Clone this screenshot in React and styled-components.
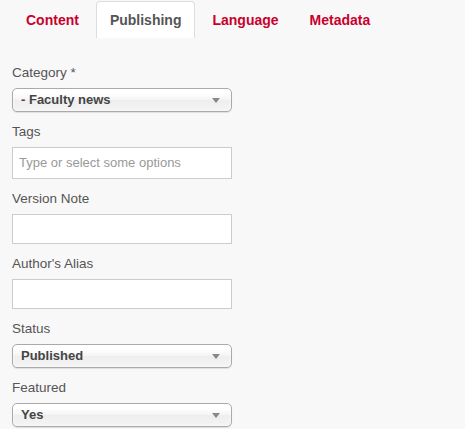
import { createGlobalStyle, styled } from 'styled-components';

const GlobalStyle = createGlobalStyle`
    html, body {
        margin: 0;
        padding: 0;
        background: #f8f8f8;
    }
    body {
        font-family: "Liberation Sans", Arial, sans-serif;
    }
`;

const Page = styled.div`
    padding: 1px 0 0 12px;
    width: 453px;
    height: 428px;
    overflow: hidden;
`;

const TabList = styled.ul`
    display: flex;
    list-style: none;
    margin: 0;
    padding: 0;
    gap: 3px;
`;

const Tab = styled.li`
    padding: 9px 13px 9px;
    line-height: 18px;
    font-size: 14px;
    font-weight: bold;
    color: ${(props) => (props.active ? '#555555' : '#c8002d')};
    background: ${(props) => (props.active ? '#ffffff' : 'transparent')};
    border: 1px solid ${(props) => (props.active ? '#dddddd' : 'transparent')};
    border-bottom: none;
    border-radius: 4px 4px 0 0;
    cursor: pointer;
`;

const Form = styled.div`
    padding-top: 26px;
    width: 220px;
`;

const Field = styled.div`
    margin-bottom: 11px;
`;

const Label = styled.label`
    display: block;
    font-size: 13.5px;
    line-height: 18px;
    color: #555555;
    margin-bottom: 6px;
`;

const Select = styled.div`
    position: relative;
    box-sizing: border-box;
    height: 24px;
    padding: 0 8px;
    border: 1px solid #aaaaaa;
    border-radius: 5px;
    background: linear-gradient(#ffffff 20%, #f4f4f4 50%, #eeeeee 52%, #f4f4f4 100%);
    box-shadow: 0 0 3px #ffffff inset, 0 1px 1px rgba(0, 0, 0, 0.1);
    font-size: 13px;
    font-weight: bold;
    line-height: 22px;
    color: #444444;
`;

const Arrow = styled.span`
    position: absolute;
    right: 11px;
    top: 9px;
    width: 0;
    height: 0;
    border-left: 4px solid transparent;
    border-right: 4px solid transparent;
    border-top: 5px solid #888888;
`;

const Input = styled.div`
    box-sizing: border-box;
    height: ${(props) => (props.tall ? '32px' : '30px')};
    padding: 0 6px;
    border: 1px solid #cccccc;
    background: #ffffff;
    font-size: 13px;
    line-height: 29px;
    color: #999999;
`;

const tabs = ['Content', 'Publishing', 'Language', 'Metadata'];

function SelectField({ label, value }) {
    return (
        <Field>
            <Label>{label}</Label>
            <Select>
                {value}
                <Arrow />
            </Select>
        </Field>
    );
}

function TextField({ label, placeholder, tall }) {
    return (
        <Field>
            <Label>{label}</Label>
            <Input tall={tall}>{placeholder}</Input>
        </Field>
    );
}

export default function App() {
    return (
        <>
            <GlobalStyle />
            <Page>
                <TabList>
                    {tabs.map((t) => (
                        <Tab key={t} active={t === 'Publishing'}>
                            {t}
                        </Tab>
                    ))}
                </TabList>
                <Form>
                    <SelectField label="Category *" value="- Faculty news" />
                    <TextField label="Tags" placeholder="Type or select some options" tall />
                    <TextField label="Version Note" />
                    <TextField label="Author's Alias" />
                    <SelectField label="Status" value="Published" />
                    <SelectField label="Featured" value="Yes" />
                </Form>
            </Page>
        </>
    );
}
